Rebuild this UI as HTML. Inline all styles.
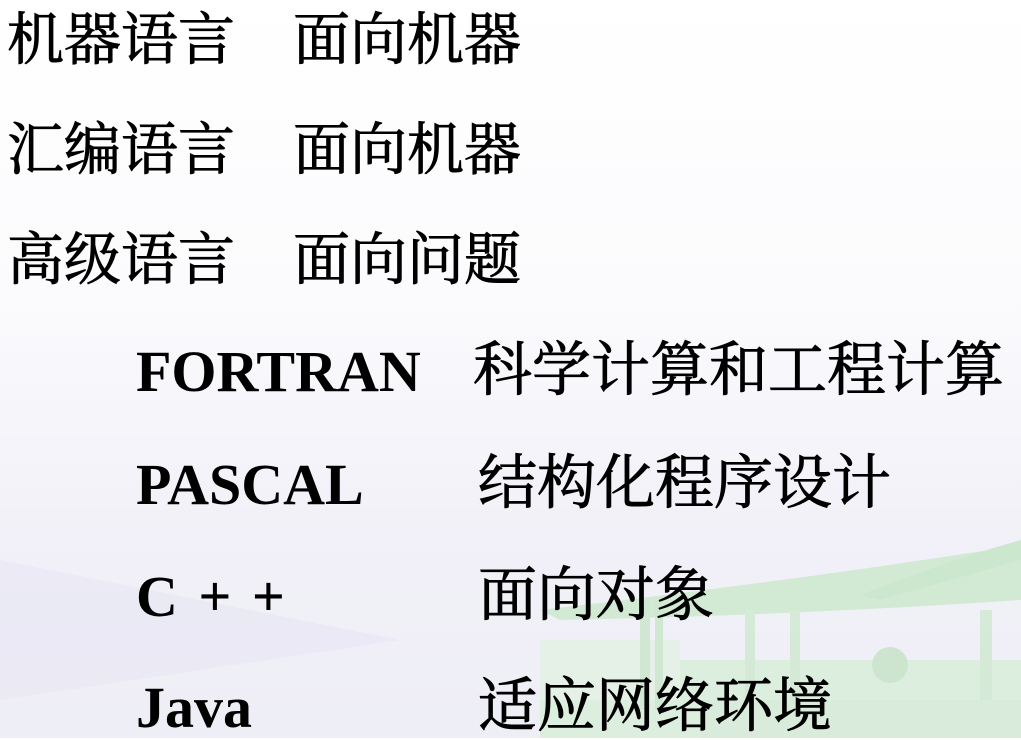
<!DOCTYPE html>
<html><head><meta charset="utf-8"><style>
html,body{margin:0;padding:0}
body{width:1021px;height:738px;overflow:hidden;position:relative;
background:linear-gradient(180deg,#ffffff 0%,#fbfbfd 40%,#f2f1f8 70%,#eeeef6 100%);}
.t{position:absolute;white-space:nowrap;font-family:"Liberation Serif","Noto Serif CJK SC",serif;font-size:57px;line-height:1;color:#000;-webkit-text-stroke:0.9px #000}
.b{font-weight:bold;font-family:"Liberation Serif",serif;-webkit-text-stroke:0}
</style></head><body>
<svg style="position:absolute;left:0;top:0" width="1021" height="738" opacity="0.75">
<path d="M0 560 Q200 600 400 640 L0 700Z" fill="#e4e2f4" opacity="0.6"/>
<path d="M540 610 Q800 580 1021 545 L1021 600 Q800 615 560 620Z" fill="#c8e8c8"/>
<path d="M860 595 Q950 560 1021 540 L1021 560 Q950 580 880 600Z" fill="#bfe4c0"/>
<rect x="540" y="660" width="481" height="78" fill="#d6eed6"/>
<rect x="540" y="640" width="140" height="60" fill="#e2f2e2"/>
<rect x="640" y="600" width="10" height="110" fill="#c6e6c6"/>
<rect x="655" y="600" width="8" height="110" fill="#c6e6c6"/>
<rect x="745" y="610" width="10" height="90" fill="#cde8cd"/>
<rect x="790" y="610" width="10" height="90" fill="#cde8cd"/>
<rect x="980" y="610" width="12" height="95" fill="#cde8cd"/>
<circle cx="890" cy="665" r="18" fill="#c2e2c2"/>
<rect x="700" y="700" width="321" height="38" fill="#d2ecd2"/>
</svg>
<div class="t" style="left:7px;top:12px">机器语言</div>
<div class="t" style="left:293px;top:12px">面向机器</div>
<div class="t" style="left:7px;top:122px">汇编语言</div>
<div class="t" style="left:293px;top:122px">面向机器</div>
<div class="t" style="left:7px;top:232px">高级语言</div>
<div class="t" style="left:293px;top:232px">面向问题</div>
<div class="t b" style="left:136px;top:343px;font-size:58px">FORTRAN</div>
<div class="t" style="left:473px;top:341px;font-size:59px">科学计算和工程计算</div>
<div class="t b" style="left:136px;top:456px;font-size:58px">PASCAL</div>
<div class="t" style="left:478px;top:454px;font-size:59px">结构化程序设计</div>
<div class="t b" style="left:136px;top:568px;font-size:58px;word-spacing:6px">C + +</div>
<div class="t" style="left:478px;top:566px;font-size:59px">面向对象</div>
<div class="t b" style="left:136px;top:679px;font-size:58px">Java</div>
<div class="t" style="left:478px;top:677px;font-size:59px">适应网络环境</div>
</body></html>
